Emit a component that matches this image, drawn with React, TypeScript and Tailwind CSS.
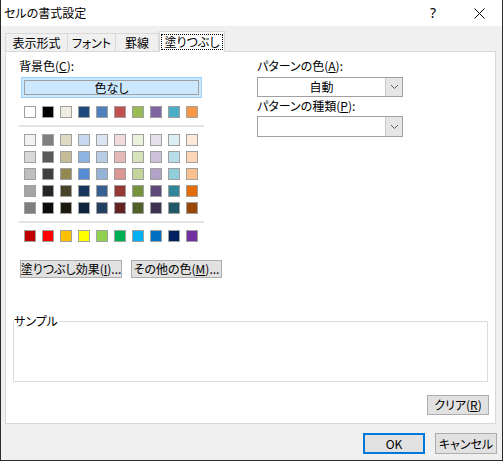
import React from "react";

const themeRow = ["#FFFFFF", "#000000", "#EEECE1", "#1F497D", "#4F81BD", "#C0504D", "#9BBB59", "#8064A2", "#4BACC6", "#F79646"];
const tintRows = [
  ["#F2F2F2", "#7F7F7F", "#DDD9C3", "#C6D9F0", "#DBE5F1", "#F2DCDB", "#EBF1DD", "#E5E0EC", "#DBEEF3", "#FDEADA"],
  ["#D8D8D8", "#595959", "#C4BD97", "#8DB3E2", "#B8CCE4", "#E5B9B7", "#D7E3BC", "#CCC1D9", "#B7DDE8", "#FBD5B5"],
  ["#BFBFBF", "#3F3F3F", "#938953", "#548DD4", "#95B3D7", "#D99694", "#C3D69B", "#B2A2C7", "#92CDDC", "#FAC08F"],
  ["#A5A5A5", "#262626", "#494429", "#17365D", "#366092", "#953734", "#76923C", "#5F497A", "#31859B", "#E36C09"],
  ["#7F7F7F", "#0C0C0C", "#1D1B10", "#0F243E", "#244061", "#632423", "#4F6128", "#3F3151", "#205867", "#974806"],
];
const standardRow = ["#C00000", "#FF0000", "#FFC000", "#FFFF00", "#92D050", "#00B050", "#00B0F0", "#0070C0", "#002060", "#7030A0"];

function SwatchRow({ colors }: { colors: string[] }) {
  return (
    <div className="flex gap-[6px] ml-[5px]">
      {colors.map((c, i) => (
        <div key={i} className="w-[12px] h-[12px] border border-[#a0a0a0]" style={{ backgroundColor: c }} />
      ))}
    </div>
  );
}

function Chevron() {
  return (
    <svg width="9" height="6" viewBox="0 0 9 6">
      <path d="M1 1 L4.5 4.5 L8 1" fill="none" stroke="#606060" strokeWidth="1" />
    </svg>
  );
}

function Dropdown({ text, h }: { text?: string; h: string }) {
  return (
    <div className={`flex w-[146px] ${h} border border-[#a0a0a0] bg-white`}>
      <div className="flex-1 flex items-center justify-center text-[12px] leading-[16px]">{text}</div>
      <div className="w-[17px] bg-[#e6e6e6] border-l border-[#c8c8c8] flex items-center justify-center">
        <Chevron />
      </div>
    </div>
  );
}

export default function App() {
  return (
    <div className="w-[503px] h-[461px] bg-[#f0f0f0] border-l border-r border-b border-[#2b2b2b] font-['Noto_Sans_CJK_JP',sans-serif] [font-feature-settings:'palt'] whitespace-nowrap text-black text-[12px] leading-[16px] flex flex-col">
      {/* Title bar */}
      <div className="h-[26px] bg-white flex items-center shrink-0">
        <div className="ml-[3px] text-[12px] leading-[16px]">セルの書式設定</div>
        <div className="ml-auto w-[46px] h-full flex items-center justify-center text-[14px] font-['Noto_Sans',sans-serif]">?</div>
        <div className="w-[46px] h-full flex items-center justify-center">
          <svg width="11" height="11" viewBox="0 0 11 11">
            <path d="M0.5 0.5 L10.5 10.5 M10.5 0.5 L0.5 10.5" stroke="#000" strokeWidth="1" />
          </svg>
        </div>
      </div>

      {/* Tabs */}
      <div className="flex items-end h-[21px] mt-[5px] ml-[4px] -mb-px relative z-10">
        <div className="w-[63px] h-[19px] border border-[#d9d9d9] bg-[#f0f0f0] flex items-center justify-center">表示形式</div>
        <div className="w-[48px] h-[19px] border-t border-r border-b border-[#d9d9d9] bg-[#f0f0f0] flex items-center justify-center">フォント</div>
        <div className="w-[43px] h-[19px] border-t border-r border-b border-[#d9d9d9] bg-[#f0f0f0] flex items-center justify-center">罫線</div>
        <div className="w-[66px] h-[21px] border-t border-l border-r border-[#d9d9d9] bg-white flex items-center justify-center">
          <span className="border border-dotted border-black px-[3px] leading-[14px]">塗りつぶし</span>
        </div>
      </div>

      {/* Panel */}
      <div className="ml-[4px] w-[491px] h-[373px] border border-[#d9d9d9] bg-white flex flex-col shrink-0">
        <div className="flex mt-[6px]">
          {/* Left column */}
          <div className="ml-[13px] w-[203px] flex flex-col">
            <div className="h-[16px]">背景色(<span className="underline">C</span>):</div>
            <div className="mt-[3px] ml-[2px] w-[181px] h-[21px] border border-[#99d1ff] bg-[#cce8ff] p-[2px]">
              <div className="w-full h-full border border-[#a0a0a0] flex items-center justify-center leading-[13px]">色なし</div>
            </div>
            <div className="mt-[8px]">
              <SwatchRow colors={themeRow} />
            </div>
            <div className="mt-[7px] w-[185px] h-[2px] bg-[#e3e3e3]" />
            <div className="mt-[7px] flex flex-col gap-[5px]">
              {tintRows.map((r, i) => (
                <SwatchRow key={i} colors={r} />
              ))}
            </div>
            <div className="mt-[7px] w-[185px] h-[2px] bg-[#e3e3e3]" />
            <div className="mt-[7px]">
              <SwatchRow colors={standardRow} />
            </div>
            <div className="mt-[18px] ml-[1px] flex gap-[9px]">
              <div className="w-[102px] h-[18px] border border-[#adadad] bg-[#e1e1e1] flex items-center justify-center leading-[14px]">
                塗りつぶし効果(<span className="underline">I</span>)...
              </div>
              <div className="w-[91px] h-[18px] border border-[#adadad] bg-[#e1e1e1] flex items-center justify-center leading-[14px]">
                その他の色(<span className="underline">M</span>)...
              </div>
            </div>
          </div>

          {/* Right column */}
          <div className="ml-[35px] flex flex-col">
            <div className="h-[16px]">パターンの色(<span className="underline">A</span>):</div>
            <div className="mt-[3px]">
              <Dropdown text="自動" h="h-[20px]" />
            </div>
            <div className="h-[16px] mt-[1px]">パターンの種類(<span className="underline">P</span>):</div>
            <div className="mt-[2px]">
              <Dropdown h="h-[21px]" />
            </div>
          </div>
        </div>

        {/* Sample group */}
        <div className="mt-[43px] ml-[7px] w-[475px] h-[61px] border border-[#dcdcdc] relative">
          <div className="absolute top-[-9px] left-0 bg-white pr-[1px] leading-[16px]">サンプル</div>
        </div>

        <div className="mt-[13px] self-end mr-[6px] w-[62px] h-[20px] border border-[#adadad] bg-[#e1e1e1] flex items-center justify-center leading-[14px]">
          クリア(<span className="underline">R</span>)
        </div>
      </div>

      {/* Bottom buttons */}
      <div className="mt-[9px] flex justify-end gap-[10px] pr-[5px]">
        <div className="w-[62px] h-[21px] border-2 border-[#0078d7] bg-[#e1e1e1] flex items-center justify-center leading-[14px]">OK</div>
        <div className="w-[62px] h-[21px] border border-[#adadad] bg-[#e1e1e1] flex items-center justify-center leading-[14px]">キャンセル</div>
      </div>
    </div>
  );
}
